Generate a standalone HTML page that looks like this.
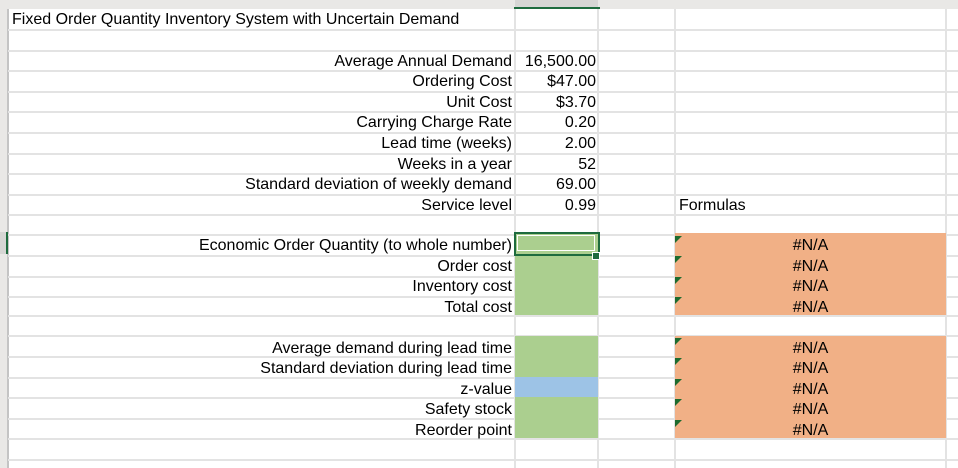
<!DOCTYPE html>
<html><head><style>
body{margin:0;width:958px;height:468px;overflow:hidden;background:#fff;font-family:"Liberation Sans",sans-serif;font-size:16px;color:#000;position:relative}
.a{position:absolute}
.h{position:absolute;left:8px;right:0;height:2px;background:#e3e3e3}
.v{position:absolute;top:9px;bottom:0;width:2px;background:#e3e3e3}
.l{position:absolute;right:446px;white-space:nowrap;line-height:20px;margin-top:2px}
.n{position:absolute;right:362px;white-space:nowrap;line-height:20px;margin-top:2px}
.na{position:absolute;left:675px;width:271px;text-align:center;line-height:20px;margin-top:2px}
.t{position:absolute;left:675px;width:0;height:0;border-top:7px solid #1e6b2e;border-right:7px solid transparent}
</style></head><body>
<div class="a" style="left:0;top:0;width:958px;height:9px;background:#e9e8e6"></div>
<div class="a" style="left:515px;top:0;width:83px;height:8px;background:#d6d6d4"></div>
<div class="a" style="left:514px;top:7px;width:86px;height:2px;background:#1e6b3e"></div>
<div class="a" style="left:0;top:9px;width:7px;height:459px;background:#e9e8e6"></div>
<div class="a" style="left:7px;top:9px;width:2px;height:459px;background:#c4c4c4"></div>
<div class="a" style="left:0;top:232px;width:6px;height:22px;background:#d6d6d4"></div>
<div class="a" style="left:6px;top:232px;width:2px;height:22px;background:#1e6b3e"></div>

<div class="h" style="top:29px"></div><div class="h" style="top:50px"></div><div class="h" style="top:70px"></div><div class="h" style="top:91px"></div><div class="h" style="top:111px"></div><div class="h" style="top:132px"></div><div class="h" style="top:153px"></div><div class="h" style="top:173px"></div><div class="h" style="top:194px"></div><div class="h" style="top:214px"></div><div class="h" style="top:234px"></div><div class="h" style="top:255px"></div><div class="h" style="top:276px"></div><div class="h" style="top:296px"></div><div class="h" style="top:315px"></div><div class="h" style="top:335px"></div><div class="h" style="top:356px"></div><div class="h" style="top:377px"></div><div class="h" style="top:397px"></div><div class="h" style="top:418px"></div><div class="h" style="top:438px"></div><div class="h" style="top:459px"></div>
<div class="v" style="left:514px"></div><div class="v" style="left:597px"></div><div class="v" style="left:674px"></div><div class="v" style="left:945px"></div>

<div class="a" style="left:515px;top:233px;width:83px;height:82px;background:#abcf8f"></div>
<div class="a" style="left:515px;top:336px;width:83px;height:102px;background:#abcf8f"></div>
<div class="a" style="left:515px;top:377px;width:83px;height:20px;background:#9dc3e6"></div>
<div class="a" style="left:675px;top:233px;width:271px;height:82px;background:#f1b086"></div>
<div class="a" style="left:675px;top:336px;width:271px;height:102px;background:#f1b086"></div>

<div class="a" style="left:514px;top:232px;width:82px;height:20px;border:2px solid #1e6b3e"></div>
<div class="a" style="left:517px;top:235px;width:76px;height:14px;border:1px solid #fff"></div>
<div class="a" style="left:592px;top:252px;width:6px;height:6px;background:#1e6b3e;border:1px solid #fff"></div>

<div class="a" style="left:12px;top:10px;line-height:20px">Fixed Order Quantity Inventory System with Uncertain Demand</div>
<div class="l" style="top:50px">Average Annual Demand</div><div class="n" style="top:50px">16,500.00</div>
<div class="l" style="top:70px">Ordering Cost</div><div class="n" style="top:70px">$47.00</div>
<div class="l" style="top:91px">Unit Cost</div><div class="n" style="top:91px">$3.70</div>
<div class="l" style="top:111px">Carrying Charge Rate</div><div class="n" style="top:111px">0.20</div>
<div class="l" style="top:132px">Lead time (weeks)</div><div class="n" style="top:132px">2.00</div>
<div class="l" style="top:153px">Weeks in a year</div><div class="n" style="top:153px">52</div>
<div class="l" style="top:173px">Standard deviation of weekly demand</div><div class="n" style="top:173px">69.00</div>
<div class="l" style="top:194px">Service level</div><div class="n" style="top:194px">0.99</div>
<div class="a" style="left:679px;top:196px;line-height:20px">Formulas</div>
<div class="l" style="top:234px">Economic Order Quantity (to whole number)</div>
<div class="l" style="top:255px">Order cost</div>
<div class="l" style="top:275px">Inventory cost</div>
<div class="l" style="top:296px">Total cost</div>
<div class="l" style="top:337px">Average demand during lead time</div>
<div class="l" style="top:357px">Standard deviation during lead time</div>
<div class="l" style="top:378px">z-value</div>
<div class="l" style="top:398px">Safety stock</div>
<div class="l" style="top:419px">Reorder point</div>

<div class="na" style="top:234px">#N/A</div><div class="na" style="top:255px">#N/A</div><div class="na" style="top:275px">#N/A</div><div class="na" style="top:296px">#N/A</div>
<div class="na" style="top:337px">#N/A</div><div class="na" style="top:357px">#N/A</div><div class="na" style="top:378px">#N/A</div><div class="na" style="top:398px">#N/A</div><div class="na" style="top:419px">#N/A</div>
<div class="t" style="top:236px"></div><div class="t" style="top:256px"></div><div class="t" style="top:277px"></div><div class="t" style="top:297px"></div>
<div class="t" style="top:338px"></div><div class="t" style="top:358px"></div><div class="t" style="top:379px"></div><div class="t" style="top:399px"></div><div class="t" style="top:420px"></div>
</body></html>
